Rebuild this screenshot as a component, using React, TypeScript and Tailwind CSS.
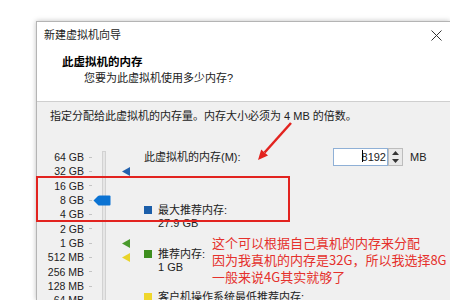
import React from 'react';

const LEVELS = ['64 GB', '32 GB', '16 GB', '8 GB', '4 GB', '2 GB', '1 GB', '512 MB', '256 MB', '128 MB', '64 MB'];

const FONT = 'font-["Liberation_Sans","Noto_Sans_CJK_SC",sans-serif]';

function Triangle({ color }: { color: string }) {
  return (
    <svg width="8" height="9" viewBox="0 0 8 9">
      <polygon points="0,4.5 8,0 8,9" fill={color} />
    </svg>
  );
}

export default function App() {
  return (
    <div className={`relative w-[450px] h-[300px] overflow-hidden bg-white text-[#111] ${FONT}`}>
      <div className="ml-[36px] mt-[21px] h-[279px] border-l border-t border-[#b4b4b4] shadow-[0_0_5px_rgba(0,0,0,0.25)]">
        {/* title bar */}
        <div className="h-[26px] flex items-center justify-between bg-white">
          <span className="pl-[7px] text-[11px] text-[#222]">新建虚拟机向导</span>
          <svg width="11" height="11" viewBox="0 0 11 11" className="mr-[8px]">
            <path d="M0.5 0.5 L10.5 10.5 M10.5 0.5 L0.5 10.5" stroke="#333" strokeWidth="1" />
          </svg>
        </div>

        {/* header */}
        <div className="h-[53px] bg-white pt-[6px]">
          <div className="pl-[25px] h-[16px] leading-[16px] text-[11.5px] font-bold text-black">此虚拟机的内存</div>
          <div className="pl-[47px] h-[16px] leading-[16px] text-[11px] text-[#222]">您要为此虚拟机使用多少内存?</div>
        </div>

        {/* body */}
        <div className="h-full border-t border-[#cfcfcf] bg-[#f0f0f0] pt-[6px]">
          <div className="pl-[13px] h-[16px] leading-[16px] text-[11px] text-[#222] whitespace-nowrap">
            指定分配给此虚拟机的内存量。内存大小必须为 4 MB 的倍数。
          </div>

          <div className="mt-[26px] flex">
            {/* level labels */}
            <div className="w-[47px] flex flex-col">
              {LEVELS.map(l => (
                <div key={l} className="h-[14.33px] leading-[14.33px] text-right text-[10.5px] text-[#222] whitespace-nowrap">
                  {l}
                </div>
              ))}
            </div>

            {/* ticks */}
            <div className="ml-[5px] w-[3px] flex flex-col">
              {LEVELS.map(l => (
                <div key={l} className="h-[14.33px] flex items-center">
                  <div className="w-[3px] h-px bg-[#c4c4c4]" />
                </div>
              ))}
            </div>

            {/* track + thumb */}
            <div className="relative ml-[10px] w-[4px]">
              <div className="mt-[1px] h-[200px] w-[4px] border border-[#d2d2d2] bg-[#e6e6e6]" />
              <svg width="18" height="11" viewBox="0 0 18 11" className="absolute left-[-9px] top-[45px]">
                <path d="M0.5 5.5 L5 1 Q5.5 0.5 6.5 0.5 L16.5 0.5 Q17.5 0.5 17.5 1.5 L17.5 9.5 Q17.5 10.5 16.5 10.5 L6.5 10.5 Q5.5 10.5 5 10 Z" fill="#0b73d3" />
              </svg>
            </div>

            {/* markers */}
            <div className="ml-[16px] w-[8px] flex flex-col">
              {LEVELS.map((l, i) => (
                <div key={l} className="h-[14.33px] flex items-center">
                  {i === 1 && <Triangle color="#2462ad" />}
                  {i === 6 && <Triangle color="#4a9a2c" />}
                  {i === 7 && <Triangle color="#e9d42a" />}
                </div>
              ))}
            </div>

            {/* content */}
            <div className="ml-[14px] flex-1 text-[11px] text-[#222]">
              <div className="h-[14px] flex items-center">
                <span className="w-[189px] whitespace-nowrap">此虚拟机的内存(M):</span>
                <div className="relative w-[55px] h-[18px] border border-[#8fb0d6] bg-white flex items-center justify-end pr-[1px]">
                  <span className="relative">
                    8192
                    <span className="absolute left-[0px] top-[1px] h-[12px] w-px bg-black" />
                  </span>
                </div>
                <div className="w-[15px] h-[18px] border border-[#bdbdbd] bg-[#e9e9e9] flex flex-col items-center justify-around">
                  <svg width="7" height="4" viewBox="0 0 7 4"><polygon points="3.5,0 7,4 0,4" fill="#333" /></svg>
                  <svg width="7" height="4" viewBox="0 0 7 4"><polygon points="0,0 7,0 3.5,4" fill="#333" /></svg>
                </div>
                <span className="ml-[7px]">MB</span>
              </div>

              <div className="mt-[40px] flex items-start">
                <div className="mt-[2px] w-[8px] h-[8px] bg-[#1b5ea9]" />
                <div className="ml-[6px] leading-[13px]">
                  <div>最大推荐内存:</div>
                  <div>27.9 GB</div>
                </div>
              </div>

              <div className="mt-[18px] flex items-start">
                <div className="mt-[2px] w-[8px] h-[8px] bg-[#3d8e1e]" />
                <div className="ml-[6px] leading-[13px]">
                  <div>推荐内存:</div>
                  <div>1 GB</div>
                </div>
              </div>

              <div className="mt-[17px] flex items-start">
                <div className="mt-[2px] w-[8px] h-[8px] bg-[#efd62c]" />
                <div className="ml-[6px] leading-[13px] whitespace-nowrap">
                  <div>客户机操作系统最低推荐内存:</div>
                </div>
              </div>
            </div>
          </div>
        </div>
      </div>

      {/* annotations */}
      <div className="absolute left-[36px] top-[176px] w-[254px] h-[46px] border-2 border-[#e2231f]" />

      <svg width="50" height="50" viewBox="0 0 50 50" className="absolute left-[250px] top-[115px]">
        <line x1="41" y1="8" x2="14.6" y2="37.5" stroke="#e2231f" strokeWidth="2.5" />
        <polygon points="8,45 18,40.4 11.2,34.5" fill="#e2231f" />
      </svg>

      <div className="absolute left-[212px] top-[234px] text-[13px] leading-[17px] text-[#e5312c] whitespace-nowrap font-['Noto_Sans_CJK_SC',sans-serif]">
        <div>这个可以根据自己真机的内存来分配</div>
        <div>因为我真机的内存是32G，所以我选择8G</div>
        <div>一般来说4G其实就够了</div>
      </div>
    </div>
  );
}
